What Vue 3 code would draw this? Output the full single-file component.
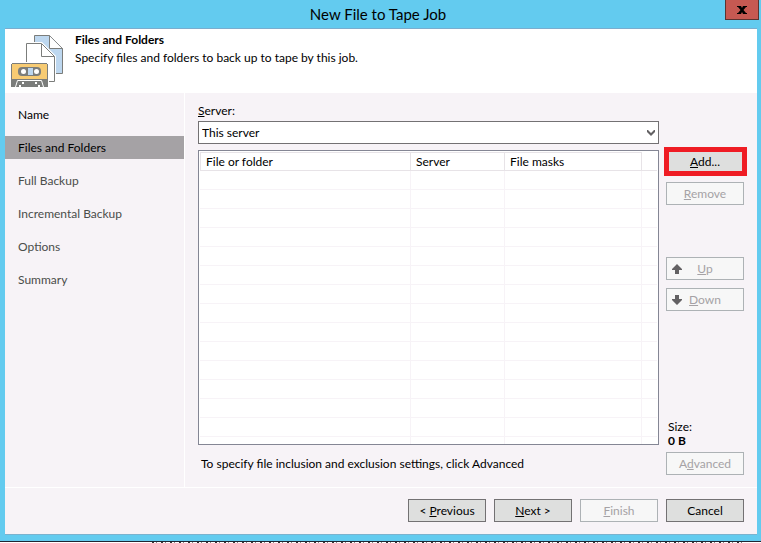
<script setup>
import { ref } from 'vue'

const steps = ['Name', 'Files and Folders', 'Full Backup', 'Incremental Backup', 'Options', 'Summary']
const current = ref(1)
const server = ref('This server')
const columns = ['File or folder', 'Server', 'File masks']
</script>

<template>
  <div class="page">
    <div class="window">
      <header class="titlebar">
        <h1>New File to Tape Job</h1>
        <button class="close" type="button" aria-label="Close">
          <svg width="10" height="8" viewBox="0 0 10 8">
            <path d="M0 0h4l1 2 1-2h4v1H9L6.500 4 9 7h1v1H6L5 6 4 8H0V7h1l2.500-3L1 1H0z" />
          </svg>
        </button>
      </header>

      <div class="content">
        <section class="intro">
          <svg class="logo" width="54" height="54" viewBox="0 0 54 54">
            <!-- back page -->
            <path d="M24.500 .5h15l13 13v25h-28z" fill="#bdd7ef" stroke="#7b7d7b" />
            <path d="M39.500 1v12.500h12.500z" fill="#fff" />
            <path d="M39.500 .5v13h13" fill="none" stroke="#7b7d7b" />
            <!-- front page -->
            <path d="M15 7h17l14 14v27H15z" fill="#fff" />
            <path d="M16.500 8.500h15l13 13v25h-28z" fill="#fff" stroke="#7b7d7b" />
            <path d="M31.500 9v12.500h13" fill="none" stroke="#7b7d7b" />
            <!-- cassette -->
            <path d="M0 27h39v27H0z" fill="#fff" />
            <path d="M1 28h37v24H1z" fill="#7b7d7b" />
            <path d="M2 29h35v15H2z" fill="#f7cb73" />
            <path d="M1 28h1v1H1zM37 28h1v1h-1z" fill="#fff" />
            <rect x="8" y="32" width="23" height="9" rx="4" fill="#7b7d7b" />
            <path d="M18 33h5v7h-5z" fill="#bdd7ef" />
            <circle cx="13.500" cy="36.500" r="2.500" fill="#fff" />
            <circle cx="26.500" cy="36.500" r="2.500" fill="#fff" />
            <path d="M5.500 52l2-6.500h24l2 6.500" fill="none" stroke="#fff" />
            <path d="M9 50h2v2H9zM12 47h2v2h-2zM25 47h2v2h-2zM28 50h2v2h-2z" fill="#fff" />
          </svg>
          <div>
            <h2>Files and Folders</h2>
            <p>Specify files and folders to back up to tape by this job.</p>
          </div>
        </section>

        <div class="body">
          <nav class="steps">
            <a
              v-for="(step, i) in steps"
              :key="step"
              href="#"
              :class="{ active: i === current, done: i < current }"
              @click.prevent="current = i"
            >{{ step }}</a>
          </nav>

          <main class="form">
            <label for="server"><u>S</u>erver:</label>
            <div class="select">
              <select id="server" v-model="server">
                <option>This server</option>
              </select>
              <svg width="8" height="6" viewBox="0 0 8 6">
                <path d="M0 0h1l3 3 3-3h1v2L4 6 0 2z" />
              </svg>
            </div>

            <div class="list">
              <table>
                <colgroup>
                  <col />
                  <col class="col-server" />
                  <col class="col-masks" />
                  <col class="col-rest" />
                </colgroup>
                <thead>
                  <tr>
                    <th v-for="column in columns" :key="column">{{ column }}</th>
                    <td></td>
                  </tr>
                </thead>
                <tbody>
                  <tr v-for="row in 40" :key="row">
                    <td v-for="cell in 4" :key="cell"></td>
                  </tr>
                </tbody>
              </table>
            </div>

            <div class="actions">
              <button class="marked" type="button"><u>A</u>dd...</button>
              <button type="button" disabled><u>R</u>emove</button>
              <button class="up" type="button" disabled>
                <svg width="10" height="10" viewBox="0 0 10 10"><path d="M5 0l5 5v1H7v4H3V6H0V5z" /></svg>
                <span><u>U</u>p</span>
              </button>
              <button class="down" type="button" disabled>
                <svg width="10" height="10" viewBox="0 0 10 10"><path d="M5 10l5-5V4H7V0H3v4H0v1z" /></svg>
                <span><u>D</u>own</span>
              </button>
              <div class="size">
                Size:
                <strong>0 B</strong>
              </div>
            </div>

            <p class="hint">To specify file inclusion and exclusion settings, click Advanced</p>
            <button class="advanced" type="button" disabled>A<u>d</u>vanced</button>
          </main>
        </div>

        <footer class="buttons">
          <button type="button">&lt; <u>P</u>revious</button>
          <button type="button"><u>N</u>ext &gt;</button>
          <button type="button" disabled><u>F</u>inish</button>
          <button type="button">Cancel</button>
        </footer>
      </div>
    </div>
    <div class="behind"></div>
  </div>
</template>

<style>
body {
  margin: 0;
}
</style>

<style scoped>
* {
  box-sizing: border-box;
}

.page {
  height: 100vh;
  display: flex;
  flex-direction: column;
  font-family: Lato, "Open Sans", sans-serif;
  font-size: 12px;
  line-height: 14px;
  color: #000;
}

h1, h2, p {
  margin: 0;
}

.window {
  flex: 1;
  min-height: 0;
  display: flex;
  flex-direction: column;
  padding: 0 4px 6px 5px;
  background: #63cbef;
  border-bottom: 1px solid #212431;
}

/* sliver of the page under the window */
.behind {
  height: 1px;
  margin: 0 16px 0 152px;
  background: repeating-linear-gradient(90deg, #333 0 2px, #fff 2px 4px, #888 4px 5px, #fff 5px 9px);
}

.titlebar {
  position: relative;
  height: 28px;
  flex: none;
}

h1 {
  padding-right: 6px;
  font-size: 15px;
  font-weight: 400;
  line-height: 28px;
  text-align: center;
}

.close {
  position: absolute;
  top: 0;
  right: -2px;
  width: 34px;
  height: 20px;
  padding: 0;
  display: flex;
  align-items: center;
  justify-content: center;
  background: #c65952;
  border: 1px solid #5a3431;
  border-top: 0;
}

.content {
  flex: 1;
  min-height: 0;
  display: flex;
  flex-direction: column;
  background: #f7f3f7;
  border-top: 1px solid #7badce;
  border-bottom: 1px solid #7bb2ce;
}

.intro {
  flex: none;
  height: 64px;
  display: flex;
  gap: 11px;
  padding: 4px 5px;
  background: #fff;
}

.logo {
  margin-top: 2px;
}

h2 {
  font-size: 12px;
  line-height: 14px;
}

.intro p {
  margin-top: 4px;
}

.body {
  flex: 1;
  min-height: 0;
  display: flex;
}

.steps {
  width: 180px;
  flex: none;
  display: flex;
  flex-direction: column;
  gap: 10px;
  padding-top: 10px;
  border-right: 1px solid #fff;
}

.steps a {
  padding-left: 13px;
  line-height: 23px;
  color: #4a4d4a;
  text-decoration: none;
}

.steps a.done {
  color: #000;
}

.steps a.active {
  color: #000;
  background: #a5a2a5;
}

.form {
  flex: 1;
  min-width: 0;
  display: grid;
  grid-template-columns: 1fr 78px;
  grid-template-rows: 17px 23px 1fr 23px;
  column-gap: 7px;
  padding: 11px 13px 12px;
}

label {
  grid-column: 1 / 3;
}

.select {
  grid-column: 1;
  position: relative;
}

select {
  appearance: none;
  display: block;
  width: 100%;
  height: 23px;
  padding: 0 20px 0 3px;
  font: inherit;
  color: #000;
  background: #fff;
  border: 1px solid #737173;
  border-radius: 0;
}

.select svg {
  position: absolute;
  right: 4px;
  top: 9px;
  fill: #636163;
  pointer-events: none;
}

.list {
  grid-column: 1;
  min-height: 0;
  margin: 6px 0 7px;
  padding: 1px;
  overflow: hidden;
  background: #fff;
  border: 1px solid #848694;
}

table {
  width: 100%;
  table-layout: fixed;
  border-spacing: 0;
}

.col-server {
  width: 94px;
}

.col-masks {
  width: 137px;
}

.col-rest {
  width: 15px;
}

th {
  height: 19px;
  padding: 0 5px;
  font-weight: 400;
  line-height: 17px;
  text-align: left;
  border: 1px solid #e7e3e7;
  border-left: 0;
}

th:first-child {
  border-left: 1px solid #e7e3e7;
}

thead td {
  border-bottom: 1px solid #e7e3e7;
  padding: 0;
}

tbody td {
  height: 19px;
  padding: 0;
  border-right: 1px solid #f7f3f7;
  border-bottom: 1px solid #f7f3f7;
}

tbody td:last-child {
  border-right: 0;
}

button {
  height: 23px;
  padding: 0;
  font: inherit;
  color: #000;
  background: #dedfde;
  border: 1px solid #737173;
}

button:disabled {
  color: #a5a2a5;
  background: #f7f7f7;
  border-color: #adb2b5;
}

.actions {
  display: flex;
  flex-direction: column;
  margin: 6px 0 4px;
}

.marked {
  position: relative;
  margin-bottom: 9px;
}

/* highlight frame around the button */
.marked::after {
  content: "";
  position: absolute;
  inset: -4px -4px -4px -3px;
  border: 5px solid #ef1c24;
}

.up, .down {
  display: flex;
  align-items: center;
  padding: 0 5px;
}

.up {
  margin: 52px 0 8px;
}

.up svg, .down svg {
  fill: #636163;
}

.up span, .down span {
  flex: 1;
  padding-right: 10px;
  text-align: center;
}

.size {
  margin-top: auto;
  padding-left: 2px;
}

.size strong {
  display: block;
}

.hint {
  padding-left: 3px;
  line-height: 23px;
}

.buttons {
  flex: none;
  display: flex;
  justify-content: flex-end;
  gap: 8px;
  padding: 11px 13px 12px;
  border-top: 1px solid #fff;
}

.buttons button {
  width: 78px;
}
</style>
